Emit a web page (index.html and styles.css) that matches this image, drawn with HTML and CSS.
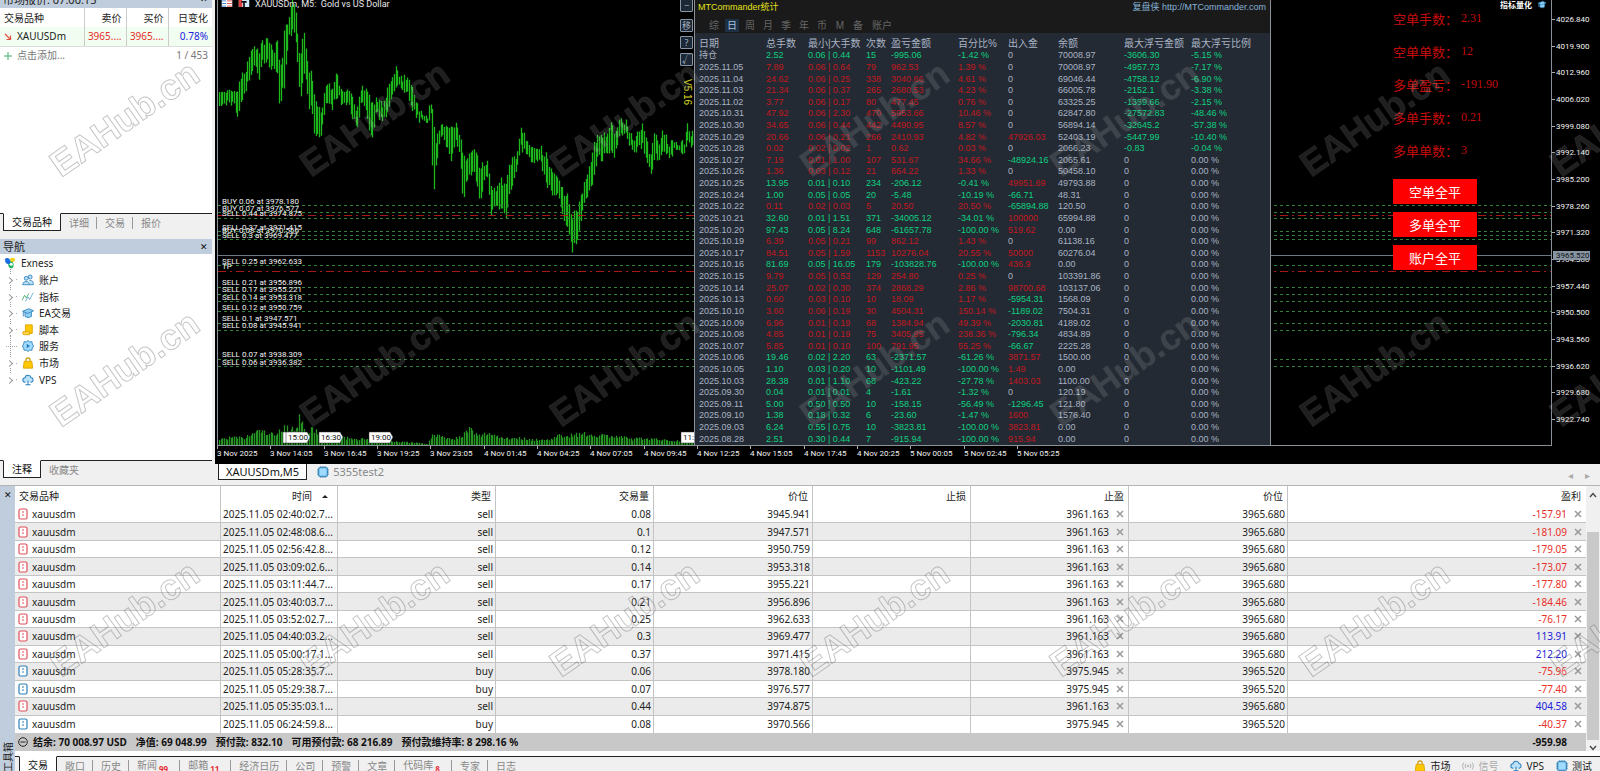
FILE: index.html
```html
<!DOCTYPE html>
<html lang="zh-CN">
<head>
<meta charset="utf-8">
<title>XAUUSDm,M5</title>
<link rel="stylesheet" href="styles.css">
</head>
<body>
<svg class="defs" width="0" height="0" aria-hidden="true">
  <defs>
    <symbol id="i-cloud" viewBox="0 0 14 14"><path d="M4 9.500H3.500a2.500 2.500 0 0 1 0-5 3.600 3.600 0 0 1 7-.5 2.800 2.800 0 0 1 .3 5.500H10" fill="#b9e2fa" stroke="#2b7fb8" stroke-width="1.200"/><path d="M7 8v4M4 12.500h6" stroke="#2b7fb8" stroke-width="1.200"/></symbol>
    <symbol id="i-bag" viewBox="0 0 14 14"><path d="M4.500 6V3.500a2.500 2.500 0 0 1 5 0V6" fill="none" stroke="#c99700" stroke-width="1.300"/><path d="M2.500 5h9l1 8h-11z" fill="#ffc800" stroke="#d9a300"/></symbol>
    <symbol id="i-chip" viewBox="0 0 14 14"><path d="M4.500 0v14M7 0v14M9.500 0v14M0 4.500h14M0 7h14M0 9.500h14" stroke="#2b7fb8"/><rect x="2" y="2" width="10" height="10" rx="1" fill="#9fdcff" stroke="#2b7fb8" stroke-width="1.300"/></symbol>
    <symbol id="i-cap" viewBox="0 0 14 14"><path d="M3.500 6v5c2 1.600 5 1.600 7.500 0V6" fill="#8fd0f5" stroke="#2b7fb8"/><path d="M.8 5 8 2l5.500 2.500L6.500 7.500z" fill="#8fd0f5" stroke="#2b7fb8"/><path d="M1.500 5.500V11" stroke="#2b7fb8"/></symbol>
    <symbol id="i-doc" viewBox="0 0 10 12"><rect x="1" y="1" width="8" height="10" rx="1.500" fill="#fff" stroke="currentColor" stroke-width="1.200"/><path d="M4 4h2M4 7h2" stroke="currentColor"/></symbol>
    <pattern id="mark" width="250" height="250" patternUnits="userSpaceOnUse"><text class="mark-text" transform="translate(61 178) rotate(-35)">EAHub.cn</text></pattern>
  </defs>
</svg>

<div class="shell">
  <div class="upper">
    <aside class="side">
      <section class="quotes">
        <header class="pane-title pane-title-cut"><span>市场报价: 07:00:15</span><button class="close" aria-label="关闭市场报价">✕</button></header>
        <table class="quote-table">
          <colgroup><col class="q-name"><col class="q-num"><col class="q-num"><col></colgroup>
          <thead><tr><th>交易品种</th><th>卖价</th><th>买价</th><th>日变化</th></tr></thead>
          <tbody>
            <tr class="quote"><td><svg class="arrow" viewBox="0 0 8 8"><path d="M1 1l5.500 5.500M6.500 2.500v4h-4" fill="none" stroke="#e05040" stroke-width="1.200"/></svg>XAUUSDm</td><td class="red">3965....</td><td class="red">3965....</td><td class="blue">0.78%</td></tr>
            <tr class="add"><td colspan="2"><svg class="arrow" viewBox="0 0 8 8"><path d="M4 0v8M0 4h8" stroke="#3cb371" stroke-width="1"/></svg>点击添加...</td><td colspan="2">1 / 453</td></tr>
          </tbody>
        </table>
      </section>
      <nav class="tabs"><button class="tab on">交易品种</button><button class="tab">详细</button><button class="tab">交易</button><button class="tab last">报价</button></nav>
      <section class="navigator">
        <header class="pane-title"><span>导航</span><button class="close" aria-label="关闭导航">✕</button></header>
        <ul class="tree">
          <li class="root"><svg class="ico" viewBox="0 0 14 14"><path d="M1 3a3 3 0 0 1 5-1l3 4-3 3-4-2z" fill="#1a6fe0"/><path d="M7 2c3-2 6-1 6 1 0 3-3 3-5 4z" fill="#f2d21b"/><path d="M5 9l4-4c3 2 3 7 0 8-2 .600-4-1-4-4z" fill="#19b35a"/><circle cx="8.500" cy="8.500" r="1.800" fill="#fff"/></svg>Exness</li>
          <li><i class="twig"></i><svg class="ico" viewBox="0 0 14 14" fill="#b9e2fa" stroke="#2b7fb8"><circle cx="5" cy="5" r="2.300"/><circle cx="9.500" cy="3.500" r="2.300"/><path d="M.800 12.500c0-5 8-5 8 0zM9 12.500h4.200c0-4-1-5-4.700-5"/></svg>账户</li>
          <li><i class="twig"></i><svg class="ico" viewBox="0 0 14 14" fill="none"><path d="M0 11l3-6 2 3 3-5" stroke="#3ea66b"/><path d="M4 12l3-5 2 3 4-8" stroke="#5aa6d8"/></svg>指标</li>
          <li><i class="twig"></i><svg class="ico"><use href="#i-cap"/></svg>EA交易</li>
          <li><i class="twig"></i><svg class="ico" viewBox="0 0 14 14"><path d="M4 1h8v10H4z" fill="#ffc800" stroke="#d9a300"/><path d="M1 9h8v3.500H2.500A1.500 1.500 0 0 1 1 11z" fill="#ffd84a" stroke="#d9a300"/></svg>脚本</li>
          <li><i class="twig leaf"></i><svg class="ico" viewBox="0 0 14 14"><path d="M7 .600l2 1.600 2.600-.200.400 2.600L13.500 7 12 9.400l-.400 2.600-2.600-.200-2 1.600-2-1.600-2.600.200L2 9.400.500 7 2 4.600 2.400 2l2.600.200z" fill="#9fdcff" stroke="#2b7fb8"/><path d="M5.500 4.500v5L9.500 7z" fill="#2b7fb8"/></svg>服务</li>
          <li><i class="twig"></i><svg class="ico"><use href="#i-bag"/></svg>市场</li>
          <li><i class="twig"></i><svg class="ico"><use href="#i-cloud"/></svg>VPS</li>
        </ul>
      </section>
      <nav class="tabs nav-tabs"><button class="tab on">注释</button><button class="tab last">收藏夹</button></nav>
    </aside>

    <main class="chart">
      <div class="canvas">
        <div class="plot">
          <svg class="layer" id="plot" role="img" aria-label="XAUUSDm M5"></svg>
          <div class="chart-name">
            <svg class="cn-icon" viewBox="0 0 12 8"><path d="M0 0h12v8H0z" fill="#fff"/><path d="M0 1h5M0 4h5M0 7h5" stroke="#2f7fd0"/><path d="M6 1h6M6 4h6M6 7h6" stroke="#e04040"/></svg>
            <svg class="cn-icon" viewBox="0 0 12 8"><path d="M0 0h12v8H0z" fill="#cfeaff"/><path d="M0 0h4v8H0z" fill="#e04040"/><path d="M3 2h6M6 2v6" stroke="#111" stroke-width="2"/></svg>
            <span>XAUUSDm, M5:&nbsp; Gold vs US Dollar</span>
          </div>
          <div class="tools">
            <button>−</button><button class="gap">移</button><button>?</button><button>√</button>
            <span class="version">V5.16</span>
          </div>
          <section class="stats">
            <header class="stats-head">
              <div class="stats-top"><strong>MTCommander统计</strong><a href="#">复盘侠 http://MTCommander.com</a></div>
              <nav class="stats-tabs"><button>综</button><button class="on">日</button><button>周</button><button>月</button><button>季</button><button>年</button><button>币</button><button>M</button><button>备</button><button class="wide">账户</button></nav>
            </header>
            <table class="stats-table">
              <thead><tr><th>日期</th><th>总手数</th><th>最小|大手数</th><th>次数</th><th>盈亏金额</th><th>百分比%</th><th>出入金</th><th>余额</th><th>最大浮亏金额</th><th>最大浮亏比例</th></tr></thead>
              <tbody id="stats"></tbody>
            </table>
          </section>
          <div class="expert"><span>指标量化</span><svg class="cap" viewBox="0 0 14 14"><use href="#i-cap"/></svg></div>
          <div class="desk">
            <dl>
              <div><dt>空单手数：</dt><dd>2.31</dd></div>
              <div><dt>空单单数：</dt><dd>12</dd></div>
              <div><dt>多单盈亏：</dt><dd>-191.90</dd></div>
              <div><dt>多单手数：</dt><dd>0.21</dd></div>
              <div><dt>多单单数：</dt><dd>3</dd></div>
            </dl>
            <button>空单全平</button><button>多单全平</button><button>账户全平</button>
          </div>
        </div>
        <svg class="prices" id="prices"></svg>
        <svg class="times" id="times"></svg>
      </div>
      <div class="chart-tabs">
        <button class="chart-tab on">XAUUSDm,M5</button>
        <button class="chart-tab"><svg class="ico"><use href="#i-chip"/></svg>5355test2</button>
        <span class="scrollers"><button aria-label="向左">◂</button><button aria-label="向右">▸</button></span>
      </div>
    </main>
  </div>

  <section class="toolbox">
    <div class="rail"><button class="close" aria-label="关闭工具箱">✕</button><span>工具箱</span></div>
    <div class="box">
      <div class="list">
        <table class="orders">
          <thead><tr><th>交易品种</th><th>时间 <i class="sort"></i></th><th>类型</th><th>交易量</th><th>价位</th><th>止损</th><th>止盈</th><th>价位</th><th>盈利</th></tr></thead>
          <tbody id="orders"></tbody>
          <tfoot><tr><td><svg class="minus" viewBox="0 0 10 10"><circle cx="5" cy="5" r="4.300" fill="none" stroke="#222"/><path d="M2.500 5h5" stroke="#222"/></svg><span>结余: 70 008.97 USD</span><span>净值: 69 048.99</span><span>预付款: 832.10</span><span>可用预付款: 68 216.89</span><span>预付款维持率: 8 298.16 %</span></td><td>-959.98</td></tr></tfoot>
        </table>
        <div class="scroll"><svg viewBox="0 0 8 6"><path d="M1 5l3-3.500L7 5" /></svg><div class="thumb"></div><svg viewBox="0 0 8 6"><path d="M1 1l3 3.500L7 1"/></svg></div>
      </div>
      <nav class="tabs box-tabs">
        <button class="tab on">交易</button><button class="tab">敞口</button><button class="tab">历史</button><button class="tab noted">新闻<sub>99</sub></button><button class="tab noted">邮箱<sub>11</sub></button><button class="tab">经济日历</button><button class="tab">公司</button><button class="tab">预警</button><button class="tab">文章</button><button class="tab noted">代码库<sub>8</sub></button><button class="tab">专家</button><button class="tab last">日志</button>
        <span class="status">
          <a href="#"><svg class="ico"><use href="#i-bag"/></svg>市场</a>
          <a href="#" class="off"><svg class="ico" viewBox="0 0 14 14" fill="none" stroke="#aaa"><circle cx="7" cy="7" r="1"/><path d="M4.500 4.500a4 4 0 0 0 0 5M9.500 4.500a4 4 0 0 1 0 5M2 3a7 7 0 0 0 0 8M12 3a7 7 0 0 1 0 8"/></svg>信号</a>
          <a href="#"><svg class="ico"><use href="#i-cloud"/></svg>VPS</a>
          <a href="#"><svg class="ico"><use href="#i-chip"/></svg>测试</a>
        </span>
      </nav>
    </div>
  </section>
  <svg class="marks" aria-hidden="true"><rect width="100%" height="100%" fill="url(#mark)"/></svg>
</div>
<script src="app.js"></script>
</body>
</html>
```

FILE: styles.css
```css
* { box-sizing: border-box; }
body { margin: 0; overflow: hidden; background: #f0f0f0; color: #222; font: 10px/14px "Noto Sans", "Noto Sans CJK SC", sans-serif; }
button { margin: 0; padding: 0; border: 0; background: none; color: inherit; font: inherit; }
table { border-collapse: collapse; border-spacing: 0; }
th { font-weight: 400; }
th, td { padding: 0; }
a { color: inherit; text-decoration: none; }
.defs { position: absolute; }
.ico { width: 12px; height: 12px; flex: none; }
.red { color: #e8302a; }
.blue { color: #2222dd; }

.shell { position: relative; display: flex; flex-direction: column; height: 100vh; }
.upper { flex: 1; min-height: 0; display: flex; }
.marks { position: absolute; inset: 0; width: 100%; height: 100%; pointer-events: none; }
.mark-text { font: bold 36px "Liberation Sans", sans-serif; fill: rgba(255, 255, 255, .12); stroke: rgba(60, 60, 60, .3); stroke-width: 1px; }

/* left column */
.side { flex: none; width: 215px; padding-right: 3px; display: flex; flex-direction: column; }
.pane-title { display: flex; justify-content: space-between; align-items: center; height: 15px; padding: 0 4px 0 3px; background: #c0cddc; font-size: 11px; }
.pane-title-cut { height: 16px; margin-top: -8px; align-items: flex-start; line-height: 16px; }
.close { font-size: 9px; line-height: 14px; color: #111; }
.quotes { height: 213px; background: #fff; }
.quote-table { width: 100%; table-layout: fixed; }
.q-name { width: 84px; }
.q-num { width: 42px; }
.quote-table th, .quote-table td { height: 19px; text-align: right; padding: 0 4px 0 0; border-right: 1px solid #ccc; white-space: nowrap; }
.quote-table th:first-child, .quote-table td:first-child { text-align: left; padding-left: 4px; }
.quote-table th:last-child, .quote-table td:last-child, .quote-table .add td { border-right: 0; }
.quote td { background: #f0fdf0; border-bottom: 1px solid #ddd; }
.quote-table .add td { color: #777; height: 17px; }
.arrow { width: 8px; height: 8px; margin-right: 5px; vertical-align: -1px; }
.tabs { display: flex; align-items: flex-start; height: 26px; border-top: 1px solid #222; color: #888; }
.tab { position: relative; height: 17px; padding: 0 8px; white-space: nowrap; }
.tab:not(.on):not(.last)::after { content: ""; position: absolute; right: 0; top: 3px; height: 12px; border-right: 1px solid #999; }
.tab.on { height: 18px; margin: -1px 0 0 3px; background: #fff; color: #111; border: 1px solid #222; border-top-color: #fff; }
.navigator { flex: 1; background: #fff; }
.tree { display: grid; grid-template-rows: repeat(8, 1fr); height: 133px; margin: 1px 0 0; padding: 0; list-style: none; font-size: 10px; }
.tree li { display: flex; align-items: center; gap: 5px; padding-left: 6px; }
.tree .root { padding-left: 4px; }
.twig { position: relative; width: 11px; height: 100%; border-left: 0; background: linear-gradient(#aaa, #aaa) 10px 50% / 3px 1px no-repeat; }
.twig::before { content: ""; position: absolute; left: 1px; top: 50%; width: 4px; height: 4px; margin-top: -2px; border: solid #999; border-width: 1px 1px 0 0; transform: rotate(45deg); }
.twig::after { content: ""; position: absolute; left: 4px; top: -3px; height: 5px; border-left: 1px dotted #999; }
.leaf { background: linear-gradient(90deg, #aaa 50%, transparent 50%) 4px 50% / 2px 1px repeat-x; }
.leaf::before { display: none; }
.leaf::after { height: 20px; }
.nav-tabs { height: 25px; }

/* chart */
.chart { flex: 1; min-width: 0; display: flex; flex-direction: column; }
.canvas { flex: 1; min-height: 0; display: grid; grid-template: 1fr 18px / 1fr 48px; background: #000; padding-left: 2px; overflow: hidden; }
.plot { position: relative; border: solid #8a9199; border-width: 0 1px 1px; min-width: 0; }
.layer { position: absolute; inset: 0; width: 100%; height: 100%; }
.layer text, .prices text, .times text { font: 8px Roboto, sans-serif; fill: #f2f2f2; }
.layer .tag-text { fill: #111; }
.prices { width: 48px; height: 100%; }
.prices .now { fill: #111; }
.times { grid-column: 1 / 3; width: 100%; height: 18px; }
.chart-name { position: absolute; top: 0; left: 3px; display: flex; gap: 5px; color: #e8e8e8; font: 9px/8px Roboto, sans-serif; }
.cn-icon { width: 12px; height: 7px; }
.tools { position: absolute; top: -1px; left: 462px; width: 13px; display: flex; flex-direction: column; gap: 4px; }
.tools button { height: 13px; border: 1px solid #8894a2; border-radius: 1px; background: #1c2836; color: #aab4c0; font-size: 9px; line-height: 10px; }
.tools .gap { margin-top: 3px; }
.version { align-self: center; margin-top: 9px; writing-mode: vertical-rl; color: #d4d420; font: 10px/12px "Liberation Sans", sans-serif; }
.stats { position: absolute; top: 0; bottom: 0; left: 476px; width: 577px; border: solid #8a9199; border-width: 0 1px; background: #232a33; color: #a9b3c4; font: 9px/11px "Liberation Sans", "Noto Sans CJK SC", sans-serif; display: flex; flex-direction: column; }
.stats-head { height: 33px; background: #1a1a1a; }
.stats-top { display: flex; justify-content: space-between; padding: 1px 4px 0 3px; line-height: 13px; }
.stats-top strong { font-weight: 400; color: #e2e21c; }
.stats-top a { color: #86b4d8; }
.stats-tabs { display: flex; padding: 5px 0 0 10px; color: #666; font-size: 10px; }
.stats-tabs button { width: 14px; height: 13px; margin: 0 2px; line-height: 13px; }
.stats-tabs .on { background: #1e3044; color: #a9c4e0; }
.stats-tabs .wide { width: auto; margin-left: 5px; }
.stats-table { flex: 1; display: grid; grid-template-rows: 17px 1fr; min-height: 0; }
.stats-table thead, .stats-table tbody { display: grid; grid-auto-rows: 1fr; min-height: 0; }
.stats-table tr { display: grid; grid-template-columns: 67px 42px 58px 25px 67px 50px 50px 66px 67px 1fr; padding-left: 4px; align-items: center; min-height: 0; }
.stats-table th { text-align: left; font-size: 10px; padding-top: 4px; white-space: nowrap; }
.stats-table td { white-space: nowrap; }
.up { color: #c21820; }
.down { color: #10d080; }
.expert { position: absolute; top: 0; right: 3px; display: flex; gap: 4px; color: #fff; font: bold 8px/9px "Noto Sans CJK SC", sans-serif; }
.cap { width: 12px; height: 9px; }
.desk { position: absolute; top: 2px; right: 74px; width: 84px; display: flex; flex-direction: column; gap: 8px; font: 13px/25px "Noto Sans CJK SC", sans-serif; }
.desk dl { height: 169px; margin: 0; color: #c40c0c; line-height: 33px; }
.desk dl div { display: flex; white-space: nowrap; }
.desk dd { margin: 0; margin-left: 3px; font: 12px/33px "Liberation Serif", serif; }
.desk button { height: 25px; background: #f00; color: #fff; }
.chart-tabs { display: flex; height: 21px; padding-left: 3px; font-size: 11px; }
.chart-tab { display: flex; align-items: center; gap: 4px; height: 16px; padding: 0 7px; color: #888; }
.chart-tab.on { background: #fff; color: #111; border: 1px solid #222; border-top: 0; margin-right: 3px; }
.scrollers { margin-left: auto; padding-right: 10px; display: flex; gap: 12px; color: #aaa; font-size: 10px; line-height: 16px; }

/* toolbox */
.toolbox { flex: none; display: flex; margin-bottom: -4px; border-top: 1px solid #b5b5b5; }
.rail { width: 15px; display: flex; flex-direction: column; align-items: center; justify-content: space-between; background: #c0cddc; padding: 2px 0 3px; }
.rail span { writing-mode: vertical-rl; text-orientation: sideways; transform: rotate(180deg); line-height: 12px; }
.box { flex: 1; min-width: 0; background: #fff; }
.list { display: flex; height: 270px; padding-bottom: 5px; }
.orders { flex: 1; display: grid; grid-template-rows: 20px 227px 18px; }
.orders thead, .orders tbody, .orders tfoot { display: grid; grid-auto-rows: 1fr; }
.orders tr { display: grid; grid-template-columns: 206px 117px 158px 158px 159px 158px 158px 159px 1fr; min-height: 0; }
.orders th, .orders td { display: flex; align-items: center; justify-content: flex-end; padding-right: 2px; border-right: 1px solid #c4c4c4; white-space: nowrap; min-height: 0; }
.orders th { padding-right: 4px; }
.orders th:first-child, .orders td:first-child { justify-content: flex-start; padding-left: 3px; }
.orders th:first-child { padding-left: 4px; }
.orders th:last-child, .orders td:last-child { border-right: 0; }
.orders th:last-child { padding-right: 5px; }
.orders td:nth-child(2) { justify-content: flex-start; padding-left: 2px; }
.orders tbody td { border-bottom: 1px solid #c4c4c4; }
.orders tbody tr:nth-child(even) { background: #ebebeb; }
.orders tbody tr:last-child td { border-bottom: 0; }
.sort { margin: 0 5px 0 10px; border: solid transparent; border-width: 0 3px 3px; border-bottom-color: #222; }
.doc { width: 10px; height: 12px; margin-right: 4px; }
.sell { color: #e0505a; }
.buy { color: #2b7fb8; }
.x { width: 8px; height: 8px; margin: 0 2px 0 7px; }
.x svg { display: block; width: 8px; height: 8px; stroke: #999; stroke-width: 1.5; }
.orders tfoot tr { grid-template-columns: 1fr 80px; background: #c8c8c8; font-weight: 700; color: #111; }
.orders tfoot td { border: 0; gap: 9px; }
.orders tfoot td:last-child { justify-content: flex-end; padding-right: 19px; }
.minus { width: 10px; height: 10px; margin-right: -4px; }
.scroll { width: 14px; display: flex; flex-direction: column; align-items: center; background: #f0f0f0; padding: 6px 0 0; }
.scroll svg { width: 8px; height: 6px; fill: none; stroke: #444; stroke-width: 1.3; }
.thumb { flex: 1; width: 12px; margin: 34px 0 5px; background: #c9c9c9; }
.box-tabs { height: 19px; background: #f0f0f0; }
.box-tabs .on { margin-left: 4px; }
.noted { padding-right: 12px; }
.noted sub { margin-left: 2px; color: #e8303a; font: bold 8px/8px "Noto Sans", sans-serif; vertical-align: -3px; }
.status { margin-left: auto; display: flex; gap: 12px; padding: 2px 8px 0 0; color: #222; }
.status a { display: flex; align-items: center; gap: 4px; }
.status .off { color: #aaa; }
```

FILE: app.js
```js
const byId = id => document.getElementById(id);

/* day; lots; min|max; count; profit; percent; flow; balance; drawdown; drawdown percent */
const days = `持仓;2.52;0.06 | 0.44;15;-995.06;-1.42;0;70008.97;-3606.30;-5.15
2025.11.05;7.89;0.06 | 0.64;79;962.53;1.39;0;70008.97;-4957.73;-7.17
2025.11.04;24.62;0.06 | 0.25;338;3040.66;4.61;0;69046.44;-4758.12;-6.90
2025.11.03;21.34;0.06 | 0.37;265;2680.53;4.23;0;66005.78;-2152.1;-3.38
2025.11.02;3.77;0.06 | 0.17;80;477.45;0.76;0;63325.25;-1359.66;-2.15
2025.10.31;47.92;0.06 | 2.30;470;5953.66;10.46;0;62847.80;-27572.83;-48.46
2025.10.30;34.65;0.06 | 0.44;442;4490.95;8.57;0;56894.14;-32645.2;-57.38
2025.10.29;20.66;0.06 | 0.21;266;2410.93;4.82;47926.03;52403.19;-5447.99;-10.40
2025.10.28;0.02;0.02 | 0.02;1;0.62;0.03;0;2066.23;-0.83;-0.04
2025.10.27;7.19;0.01 | 1.00;107;531.67;34.66;-48924.16;2065.61
2025.10.26;1.36;0.03 | 0.12;21;664.22;1.33;0;50458.10
2025.10.25;13.95;0.01 | 0.10;234;-206.12;-0.41;49951.69;49793.88
2025.10.24;1.00;0.05 | 0.05;20;-5.48;-10.19;-66.71;48.31
2025.10.22;0.11;0.02 | 0.03;5;20.50;20.50;-65894.88;120.50
2025.10.21;32.60;0.01 | 1.51;371;-34005.12;-34.01;100000;65994.88
2025.10.20;97.43;0.05 | 8.24;648;-61657.78;-100.00;519.62;0.00
2025.10.19;6.39;0.05 | 0.21;99;862.12;1.43;0;61138.16
2025.10.17;84.51;0.05 | 1.59;1153;10276.04;20.55;50000;60276.04
2025.10.16;81.69;0.05 | 16.05;179;-103828.76;-100.00;436.9;0.00
2025.10.15;9.79;0.05 | 0.53;129;254.80;0.25;0;103391.86
2025.10.14;25.07;0.02 | 0.30;374;2868.29;2.86;98700.68;103137.06
2025.10.13;0.60;0.03 | 0.10;10;18.09;1.17;-5954.31;1568.09
2025.10.10;3.60;0.06 | 0.19;30;4504.31;150.14;-1189.02;7504.31
2025.10.09;6.96;0.01 | 0.19;68;1384.94;49.39;-2030.81;4189.02
2025.10.08;4.85;0.01 | 0.19;75;3405.95;238.36;-796.34;4834.89
2025.10.07;5.85;0.01 | 0.10;100;791.95;55.25;-66.67;2225.28
2025.10.06;19.46;0.02 | 2.20;63;-2371.57;-61.26;3871.57;1500.00
2025.10.05;1.10;0.03 | 0.20;10;-1101.49;-100.00;1.49;0.00
2025.10.03;28.38;0.01 | 1.10;68;-423.22;-27.78;1403.03;1100.00
2025.09.30;0.04;0.01 | 0.01;4;-1.61;-1.32;0;120.19
2025.09.11;5.00;0.50 | 0.50;10;-158.15;-56.49;-1296.45;121.80
2025.09.10;1.38;0.18 | 0.32;6;-23.60;-1.47;1600;1576.40
2025.09.03;6.24;0.55 | 0.75;10;-3823.81;-100.00;3823.81;0.00
2025.08.28;2.51;0.30 | 0.44;7;-915.94;-100.00;915.94;0.00`;
const tone = v => v === '0' || v === '0.00' ? '' : v.startsWith('-') ? 'down' : 'up';
byId('stats').innerHTML = days.split('\n').map(line => {
  const [day, lots, range, n, profit, pct, flow, bal, dd = '0', ddp = '0.00'] = line.split(';');
  const t = tone(profit);
  const cell = (c, v) => `<td class="${c}">${v}</td>`;
  return '<tr>' + cell('', day) + cell(t, lots) + cell(t, range) + cell(t, n) + cell(t, profit) + cell(t, pct + ' %') +
    cell(tone(flow), flow) + cell('', bal) + cell(tone(dd), dd) + cell(tone(ddp), ddp + ' %') + '</tr>';
}).join('');

const orders = `02:40:02.7 sell 0.08 3945.941 3961.163 3965.680 -157.91
02:48:08.6 sell 0.1 3947.571 3961.163 3965.680 -181.09
02:56:42.8 sell 0.12 3950.759 3961.163 3965.680 -179.05
03:09:02.6 sell 0.14 3953.318 3961.163 3965.680 -173.07
03:11:44.7 sell 0.17 3955.221 3961.163 3965.680 -177.80
03:40:03.7 sell 0.21 3956.896 3961.163 3965.680 -184.46
03:52:02.7 sell 0.25 3962.633 3961.163 3965.680 -76.17
04:40:03.2 sell 0.3 3969.477 3961.163 3965.680 113.91
05:00:17.1 sell 0.37 3971.415 3961.163 3965.680 212.20
05:28:35.7 buy 0.06 3978.180 3975.945 3965.520 -75.96
05:29:38.7 buy 0.07 3976.577 3975.945 3965.520 -77.40
05:35:03.1 sell 0.44 3974.875 3961.163 3965.680 404.58
06:24:59.8 buy 0.08 3970.566 3975.945 3965.520 -40.37`;
const x = label => `<button class="x" aria-label="${label}"><svg viewBox="0 0 8 8"><path d="M1 1l6 6M7 1L1 7"/></svg></button>`;
byId('orders').innerHTML = orders.split('\n').map(line => {
  const [time, side, lots, open, tp, price, profit] = line.split(' ');
  return `<tr><td><svg class="doc ${side}"><use href="#i-doc"/></svg>xauusdm</td><td>2025.11.05 ${time}...</td><td>${side}</td><td>${lots}</td><td>${open}</td><td></td>` +
    `<td>${tp}${x('取消止盈')}</td><td>${price}</td><td class="${profit.startsWith('-') ? 'red' : 'blue'}">${profit}${x('平仓')}</td></tr>`;
}).join('');

/* bars: position, high, low in thirds of a pixel */
const swings = [[22,290,330],[50,265,305],[65,265,310],[78,285,345],[85,240,325],[100,220,275],[117,160,225],[133,140,200],[145,150,240],[152,125,175],[175,125,195],[190,150,215],[198,125,205],[206,190,345],[212,210,280],[220,75,250],[232,60,110],[240,20,100],[248,0,90],[257,70,160],[263,150,265],[270,150,300],[278,95,210],[286,150,250],[292,210,325],[302,220,330],[310,300,415],[320,310,400],[330,340,410],[335,310,360],[345,260,310],[362,260,325],[377,225,280],[390,280,310],[410,275,315],[425,300,350],[438,330,375],[450,255,310],[465,270,330],[474,280,395],[482,310,425],[495,295,340],[515,320,370],[530,260,330],[545,220,270],[557,195,245],[570,240,270],[590,225,280],[605,270,330],[625,330,360],[650,345,360],[660,300,350],[667,360,587],[674,430,490],[690,370,410],[705,370,435],[720,390,475],[732,375,420],[745,410,470],[757,470,615],[765,490,545],[780,450,525],[790,435,520],[805,500,600],[820,490,540],[830,480,530],[838,560,650],[850,570,620],[868,540,620],[884,560,645],[895,490,575],[915,470,520],[930,375,440],[945,420,465],[970,440,495],[985,445,480],[1005,465,545],[1022,520,580],[1040,530,590],[1055,575,640],[1070,590,690],[1082,650,750],[1100,630,725],[1110,590,650],[1130,510,580],[1150,430,530],[1158,405,470],[1175,415,475],[1200,375,440],[1210,400,470],[1225,355,400],[1245,365,410],[1270,430,465],[1293,370,430],[1310,440,490],[1318,470,528],[1330,405,470],[1345,430,475],[1357,395,440],[1370,430,465],[1400,425,450],[1420,430,465],[1426,365,430],[1440,405,440],[1455,400,430]];
const volumes = [[22,16],[60,22],[100,20],[140,42],[165,36],[185,30],[215,50],[240,45],[265,75],[285,40],[310,45],[340,20],[380,22],[440,18],[520,12],[600,8],[650,3],[665,34],[700,22],[740,20],[775,46],[800,26],[835,36],[870,22],[920,20],[1000,14],[1050,28],[1100,32],[1150,30],[1210,26],[1260,18],[1310,20],[1360,14],[1455,12]];
const between = (list, at, key) => {
  const i = Math.max(1, list.findIndex(p => p[0] >= at));
  const [a, b] = [list[i - 1], list[i]];
  return a[key] + (b[key] - a[key]) * (at - a[0]) / (b[0] - a[0]);
};
let seed = 7;
const rnd = () => (seed = (seed * 16807) % 2147483647) / 2147483647;
let bars = '', vols = '';
for (let p = 24; p < 1452; p += 5) {
  const px = Math.round(p / 3 - 7) + 0.5;
  const hi = between(swings, p, 1) + rnd() * 24 - 12, lo = between(swings, p, 2) - rnd() * 24 + 12;
  bars += `M${px} ${(hi / 3).toFixed(1)}V${(Math.max(lo, hi + 14) / 3).toFixed(1)}`;
  vols += `M${px} 445v${(-between(volumes, p, 1) * (0.75 + rnd() * 0.5) / 3).toFixed(1)}`;
}
const row = (y, color, dash) => `<line x1="0" x2="100%" y1="${y}.5" y2="${y}.5" stroke="${color}" stroke-dasharray="${dash}"/>`;
const levels = [205, 212, 218, 231, 235, 239, 265, 287, 294, 301, 311, 323, 330, 359, 366];
const labels = [['BUY 0.06 at 3978.180', 204], ['BUY 0.07 at 3976.577', 211], ['SELL 0.44 at 3974.875', 216], ['SELL 0.37 at 3971.415', 230], ['BUY 0.08 at 3970.566', 233], ['SELL 0.3 at 3969.477', 238], ['SELL 0.25 at 3962.633', 264], ['TP', 269], ['SELL 0.21 at 3956.896', 285], ['SELL 0.17 at 3955.221', 292], ['SELL 0.14 at 3953.318', 300], ['SELL 0.12 at 3950.759', 310], ['SELL 0.1 at 3947.571', 321], ['SELL 0.08 at 3945.941', 328], ['SELL 0.07 at 3938.309', 357], ['SELL 0.06 at 3936.382', 365]];
const tags = [[65, ''], [68, '15:00'], [101, '16:30'], [151, '19:00'], [463, '11:30']];
byId('plot').innerHTML =
  `<path d="${vols}" stroke="#269422" stroke-width="1.3"/><path d="${bars}" stroke="#1cb81c" stroke-width="1.3"/>` +
  levels.map(y => row(y, '#35803a', '3 3')).join('') +
  row(215, '#a81818', '8 4 2 4') + row(271, '#a81818', '8 4 2 4') + row(255, '#6d7780', 'none') +
  labels.map(([t, y]) => `<text x="4" y="${y}">${t}</text>`).join('') +
  tags.map(([px, t]) => `<path d="M${px} 432h21l3 5-3 6h-21z" fill="#fff" stroke="#333" stroke-width=".5"/><text class="tag-text" x="${px + 2}" y="440">${t}</text>`).join('');

const scale = ['4026.840', '4019.900', '4012.960', '4006.020', '3999.080', '3992.140', '3985.200', '3978.260', '3971.320', '3964.380', '3957.440', '3950.500', '3943.560', '3936.620', '3929.680', '3922.740'];
byId('prices').innerHTML = scale.map((t, i) => {
  const y = Math.round(19 + i * 26.67);
  return `<path d="M0 ${y}.5h3" stroke="#aaa"/><text x="4" y="${y + 3}">${t}</text>`;
}).join('') + '<path d="M1 251h37v9H1z" fill="#8794a2"/><text class="now" x="4" y="258">3965.520</text>';

const times = ['3 Nov 2025', '3 Nov 14:05', '3 Nov 16:45', '3 Nov 19:25', '3 Nov 23:05', '4 Nov 01:45', '4 Nov 04:25', '4 Nov 07:05', '4 Nov 09:45', '4 Nov 12:25', '4 Nov 15:05', '4 Nov 17:45', '4 Nov 20:25', '5 Nov 00:05', '5 Nov 02:45', '5 Nov 05:25'];
byId('times').innerHTML = times.map((t, i) => {
  const px = Math.round(i * 53.33);
  return `<path d="M${px}.5 0v3" stroke="#aaa"/><text x="${px}" y="10">${t}</text>`;
}).join('');
```
